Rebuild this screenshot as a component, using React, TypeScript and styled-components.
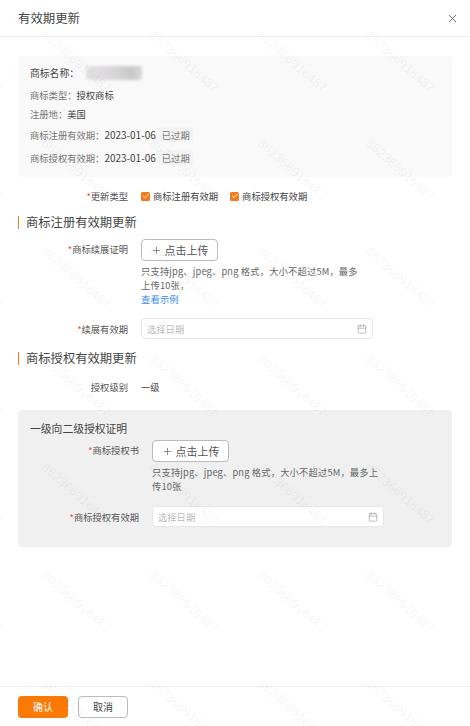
import React from "react";
import styled, { createGlobalStyle } from "styled-components";
import { Plus, X, Calendar, Check } from "lucide-react";

const WATERMARK_COUNT = 48;

const App = () => {
  return (
    <Page>
      <GlobalStyle />
      <Header>
        <Title>有效期更新</Title>
        <X size={13} color="#555" strokeWidth={1.5} />
      </Header>

      <Body>
        <InfoPanel>
          <NameRow>
            商标名称：
            <BlurredName />
          </NameRow>
          <InfoRow>
            <InfoKey>商标类型：</InfoKey>授权商标
          </InfoRow>
          <InfoRow>
            <InfoKey>注册地：</InfoKey>美国
          </InfoRow>
          <ValidityRow>
            <InfoKey>商标注册有效期：</InfoKey>
            <DateText>2023-01-06</DateText>
            <ExpiredTag>已过期</ExpiredTag>
          </ValidityRow>
          <ValidityRow>
            <InfoKey>商标授权有效期：</InfoKey>
            <DateText>2023-01-06</DateText>
            <ExpiredTag>已过期</ExpiredTag>
          </ValidityRow>
        </InfoPanel>

        <TypeRow>
          <FormLabel>
            <Req>*</Req>更新类型
          </FormLabel>
          <CheckItem>
            <CheckBox>
              <Check size={8} color="#fff" strokeWidth={3} />
            </CheckBox>
            商标注册有效期
          </CheckItem>
          <CheckItem>
            <CheckBox>
              <Check size={8} color="#fff" strokeWidth={3} />
            </CheckBox>
            商标授权有效期
          </CheckItem>
        </TypeRow>

        <SectionTitle>商标注册有效期更新</SectionTitle>

        <FormRow>
          <FormLabel>
            <Req>*</Req>商标续展证明
          </FormLabel>
          <FieldCol>
            <UploadBtn>
              <Plus size={11} strokeWidth={1.4} />
              点击上传
            </UploadBtn>
            <Help $width={222}>
              只支持jpg、jpeg、png 格式，大小不超过5M，最多上传10张，
              <ExampleLink>查看示例</ExampleLink>
            </Help>
          </FieldCol>
        </FormRow>

        <DateRow>
          <FormLabel>
            <Req>*</Req>续展有效期
          </FormLabel>
          <DateInput>
            选择日期
            <Calendar size={10} color="#999" strokeWidth={1.5} />
          </DateInput>
        </DateRow>

        <SecondSection>商标授权有效期更新</SecondSection>

        <LevelRow>
          <FormLabel>授权级别</FormLabel>
          <LevelValue>一级</LevelValue>
        </LevelRow>

        <GrayPanel>
          <GrayTitle>一级向二级授权证明</GrayTitle>
          <GrayFormRow>
            <GrayLabel>
              <Req>*</Req>商标授权书
            </GrayLabel>
            <FieldCol>
              <UploadBtn>
                <Plus size={11} strokeWidth={1.4} />
                点击上传
              </UploadBtn>
              <Help $width={232}>
                只支持jpg、jpeg、png 格式，大小不超过5M，最多上传10张
              </Help>
            </FieldCol>
          </GrayFormRow>
          <GrayDateRow>
            <GrayLabel>
              <Req>*</Req>商标授权有效期
            </GrayLabel>
            <DateInput>
              选择日期
              <Calendar size={10} color="#999" strokeWidth={1.5} />
            </DateInput>
          </GrayDateRow>
        </GrayPanel>
      </Body>

      <Footer>
        <ConfirmBtn>确认</ConfirmBtn>
        <CancelBtn>取消</CancelBtn>
      </Footer>

      <Watermarks>
        {Array.from({ length: WATERMARK_COUNT }).map((_, i) => (
          <WatermarkCell key={i}>
            <WatermarkText>862366916487</WatermarkText>
          </WatermarkCell>
        ))}
      </Watermarks>
    </Page>
  );
};

export default App;

const GlobalStyle = createGlobalStyle`
  html, body {
    margin: 0;
    padding: 0;
    background: #fff;
  }
  * {
    box-sizing: border-box;
  }
`;

const Page = styled.div`
  position: relative;
  width: 470px;
  height: 726px;
  overflow: hidden;
  display: flex;
  flex-direction: column;
  font-family: "Noto Sans CJK SC", "Liberation Sans", sans-serif;
  font-size: 9.3px;
  color: #444;
  background: #fff;
`;

const Header = styled.div`
  height: 37px;
  flex: none;
  display: flex;
  align-items: center;
  justify-content: space-between;
  padding: 0 11px 0 18px;
  border-bottom: 1px solid #eee;
`;

const Title = styled.div`
  font-size: 12.4px;
  color: #444;
`;

const Body = styled.div`
  flex: 1;
  padding: 19px 18px 0;
`;

const InfoPanel = styled.div`
  height: 121px;
  background: #f9f9f9;
  border-radius: 4px;
  padding: 9px 12px 0;
`;

const NameRow = styled.div`
  display: flex;
  align-items: center;
  height: 16px;
  font-size: 9.8px;
  margin-bottom: 4px;
`;

const BlurredName = styled.div`
  width: 56px;
  height: 14px;
  margin-left: 7px;
  background: linear-gradient(90deg, #e4e2e4, #d6d4d6 55%, #c9c9c9 80%, #d8d8d8);
  border-radius: 3px;
  filter: blur(1.5px);
`;

const InfoRow = styled.div`
  display: flex;
  align-items: center;
  height: 19px;
`;

const InfoKey = styled.span`
  color: #777;
`;

const ValidityRow = styled.div`
  display: flex;
  align-items: center;
  height: 23px;
`;

const DateText = styled.span`
  font-size: 10px;
`;

const ExpiredTag = styled.span`
  display: inline-flex;
  align-items: center;
  justify-content: center;
  height: 15px;
  width: 34px;
  margin-left: 3px;
  background: #f3f3f3;
  border-radius: 2px;
  color: #777;
`;

const TypeRow = styled.div`
  display: flex;
  align-items: center;
  height: 16px;
  margin-top: 11px;
`;

const FormLabel = styled.div`
  flex: none;
  width: 110px;
  text-align: right;
  color: #555;
  line-height: 20px;
`;

const GrayLabel = styled(FormLabel)`
  width: 109px;
`;

const Req = styled.span`
  color: #f04a4a;
`;

const CheckItem = styled.label`
  display: flex;
  align-items: center;
  gap: 3px;
  margin-left: 13px;
  & + & {
    margin-left: 12px;
  }
`;

const CheckBox = styled.span`
  width: 9px;
  height: 9px;
  background: #f47a1c;
  border-radius: 1.5px;
  display: flex;
  align-items: center;
  justify-content: center;
`;

const SectionTitle = styled.div`
  height: 13px;
  line-height: 13px;
  margin-top: 12px;
  padding-left: 7px;
  border-left: 1.5px solid #f47a1c;
  font-size: 12.3px;
  color: #444;
`;

const SecondSection = styled(SectionTitle)`
  margin-top: 13px;
`;

const FormRow = styled.div`
  display: flex;
  gap: 13px;
  margin-top: 10px;
`;

const GrayFormRow = styled(FormRow)`
  margin-top: 4px;
`;

const FieldCol = styled.div`
  display: flex;
  flex-direction: column;
  align-items: flex-start;
`;

const UploadBtn = styled.div`
  width: 77px;
  height: 22px;
  display: flex;
  align-items: center;
  justify-content: center;
  gap: 3px;
  background: #fff;
  border: 1px solid #bbb;
  border-radius: 4px;
  font-size: 11px;
  color: #555;
`;

const Help = styled.div<{ $width: number }>`
  width: ${(p) => p.$width}px;
  margin-top: 3px;
  line-height: 14px;
  letter-spacing: 0.15px;
  color: #666;
`;

const ExampleLink = styled.div`
  color: #3d8bf0;
`;

const DateRow = styled.div`
  display: flex;
  gap: 13px;
  align-items: center;
  margin-top: 12px;
`;

const DateInput = styled.div`
  width: 232px;
  height: 21px;
  display: flex;
  align-items: center;
  justify-content: space-between;
  padding: 0 5px;
  background: #fff;
  border: 1px solid #e6e6e6;
  border-radius: 4px;
  color: #bbb;
`;

const LevelRow = styled.div`
  display: flex;
  align-items: center;
  gap: 13px;
  height: 20px;
  margin-top: 12px;
`;

const LevelValue = styled.div`
  color: #444;
`;

const GrayPanel = styled.div`
  height: 137px;
  margin-top: 13px;
  padding: 10px 12px 0;
  background: #f0f0f0;
  border-radius: 4px;
`;

const GrayTitle = styled.div`
  height: 16px;
  line-height: 16px;
  font-size: 10.8px;
  color: #444;
`;

const GrayDateRow = styled(DateRow)`
  margin-top: 13px;
`;

const Footer = styled.div`
  height: 40px;
  flex: none;
  display: flex;
  align-items: center;
  gap: 10px;
  padding: 0 18px;
  border-top: 1px solid #eee;
`;

const ConfirmBtn = styled.div`
  width: 50px;
  height: 22px;
  display: flex;
  align-items: center;
  justify-content: center;
  background: #fb7a06;
  border-radius: 4px;
  color: #fff;
  font-size: 10px;
`;

const CancelBtn = styled(ConfirmBtn)`
  background: #fff;
  border: 1px solid #bbb;
  color: #444;
`;

const Watermarks = styled.div`
  position: absolute;
  left: -86px;
  top: -101px;
  display: grid;
  grid-template-columns: repeat(6, 108px);
  grid-auto-rows: 108px;
  pointer-events: none;
`;

const WatermarkCell = styled.div`
  display: flex;
  align-items: center;
  justify-content: center;
`;

const WatermarkText = styled.span`
  font-family: "Liberation Sans", sans-serif;
  font-size: 13px;
  white-space: nowrap;
  color: rgba(0, 0, 0, 0.06);
  transform: rotate(41deg);
`;
